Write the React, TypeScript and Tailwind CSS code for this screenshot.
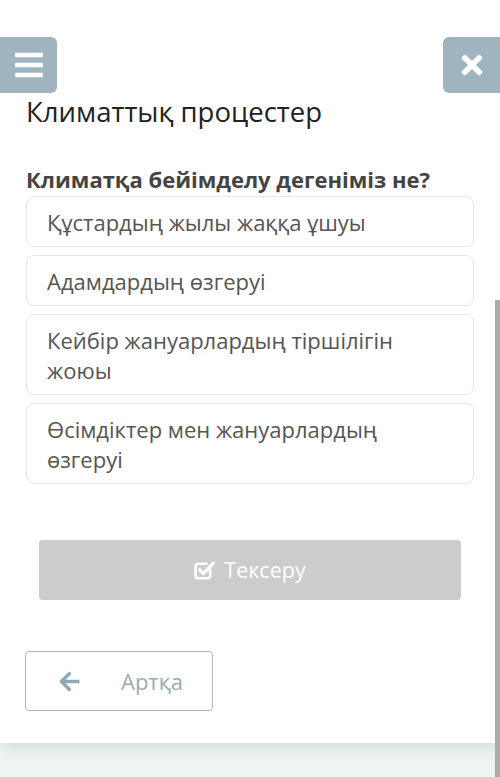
import { FaBars, FaTimes, FaArrowLeft } from 'react-icons/fa';

const options = [
  'Құстардың жылы жаққа ұшуы',
  'Адамдардың өзгеруі',
  'Кейбір жануарлардың тіршілігін жоюы',
  'Өсімдіктер мен жануарлардың өзгеруі',
];

function CheckSquareIcon() {
  return (
    <svg className="h-[21px] w-[22px] shrink-0" viewBox="0 0 21 20" fill="none" aria-hidden="true">
      <path
        d="M15.5 9.5v5.5a2.5 2.5 0 0 1-2.5 2.5H4A2.5 2.5 0 0 1 1.5 15V6A2.5 2.5 0 0 1 4 3.5h8"
        stroke="currentColor"
        strokeWidth="2.4"
        strokeLinecap="round"
      />
      <path
        d="M5.5 9.5l3.5 3.5 9.5-10"
        stroke="currentColor"
        strokeWidth="3.2"
        strokeLinecap="round"
        strokeLinejoin="round"
      />
    </svg>
  );
}

export default function App() {
  return (
    <div className="relative w-[500px] h-[777px] overflow-hidden bg-[#eef3f4] font-['Open_Sans',sans-serif]">
      {/* Main card */}
      <div className="h-[743px] bg-white px-[26px] pt-[94px] shadow-[0_4px_14px_rgba(0,0,0,0.1)]">
        <h1 className="text-[27.5px] leading-[36px] font-normal text-[#222]">Климаттық процестер</h1>

        <h2 className="mt-[35px] text-[22px] leading-[28px] font-bold text-[#444]">
          Климатқа бейімделу дегеніміз не?
        </h2>

        <div className="mt-[3px] flex flex-col gap-[8px]">
          {options.map((opt) => (
            <div
              key={opt}
              className="rounded-[8px] border border-[#e3e6e8] pl-[20px] pr-[40px] pt-[10px] pb-[9px] text-[22px] leading-[30px] text-[#555]"
            >
              {opt}
            </div>
          ))}
        </div>

        <div className="mx-[13px] mt-[56px] flex h-[60px] items-center justify-center gap-[8px] rounded-[4px] bg-[#cccccc] text-[21.5px] text-white">
          <CheckSquareIcon />
          <span>Тексеру</span>
        </div>

        <div className="mt-[51px] flex h-[60px] w-[188px] -ml-px items-center rounded-[4px] border border-[#a9b9c2] text-[22px] text-[#9aacb6]">
          <FaArrowLeft size={23} className="ml-[32px] text-[#8fa8b5]" />
          <span className="ml-[40px]">Артқа</span>
        </div>
      </div>

      {/* Nav buttons */}
      <div className="absolute left-0 top-[37px] flex h-[56px] w-[57px] items-center justify-center rounded-r-[6px] bg-[#a0b4c0] text-white">
        <FaBars size={32} />
      </div>
      <div className="absolute right-0 top-[37px] flex h-[56px] w-[57px] items-center justify-center rounded-l-[6px] bg-[#a0b4c0] text-white">
        <FaTimes size={30} />
      </div>

      {/* Scrollbar */}
      <div className="absolute right-0 top-[300px] h-[477px] w-[5px] bg-[#ababab]" />
    </div>
  );
}
